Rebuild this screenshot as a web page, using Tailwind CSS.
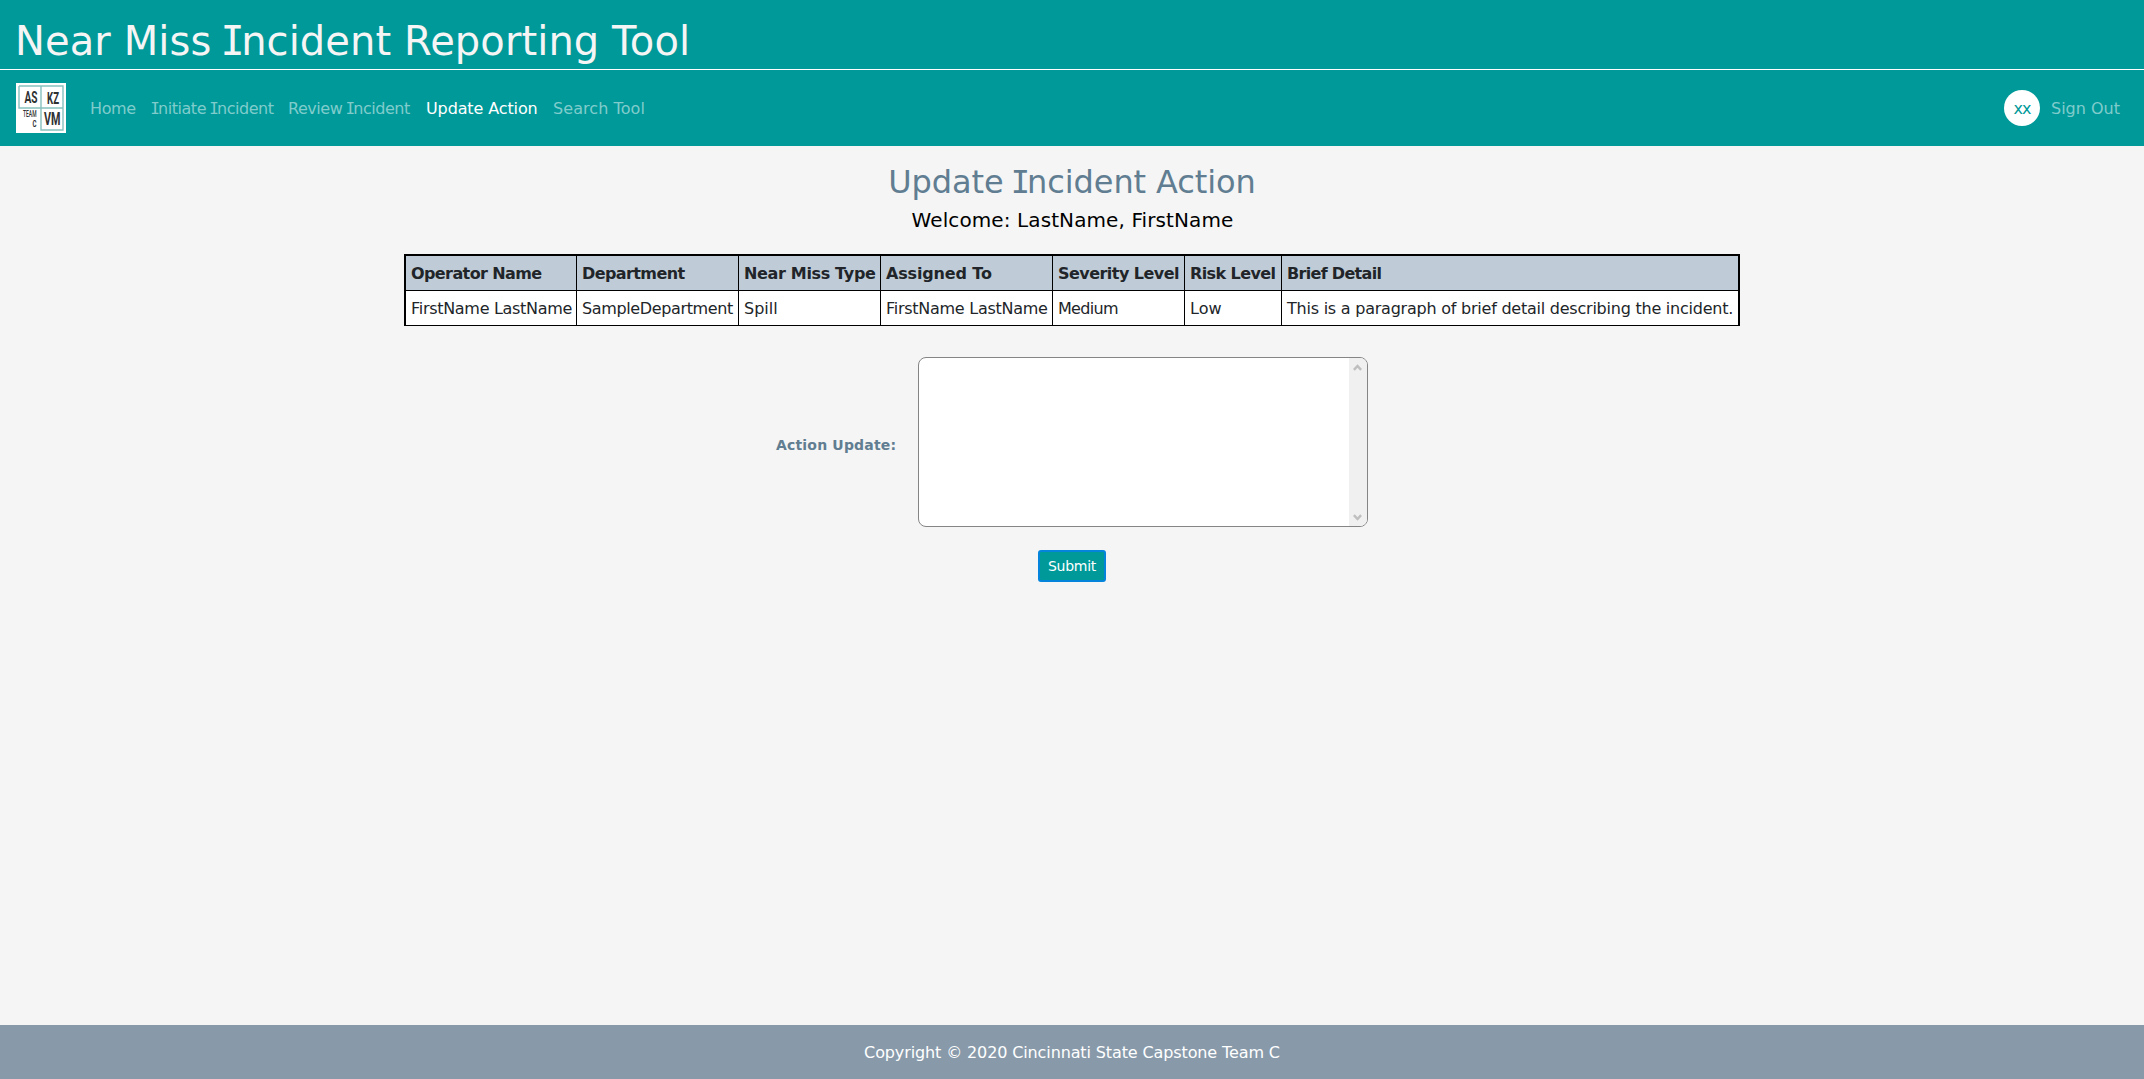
<!DOCTYPE html>
<html lang="en">
<head>
<meta charset="utf-8">
<title>Near Miss Incident Reporting Tool</title>
<script src="https://cdn.jsdelivr.net/npm/@tailwindcss/browser@4"></script>
</head>
<body class="flex h-[1079px] flex-col overflow-hidden bg-[#f5f5f5] font-['Verdana','DejaVu_Sans',sans-serif] text-base text-[#212529]">
  <header class="bg-[#009999]">
    <div class="h-[70px] border-b border-white pt-4 pl-[15px]">
      <h1 class="h-[50px] text-[40px] leading-[50px] tracking-[0.09px] whitespace-nowrap text-[#f5f5f5]">Near Miss <span class="-mx-[0.09em] font-['DejaVu_Sans_Mono']">I</span>ncident Reporting Tool</h1>
    </div>
    <nav class="flex h-[76px] items-center pr-6 pl-4">
      <svg class="size-[50px] shrink-0 overflow-visible" viewBox="0 0 50 50">
        <rect width="50" height="50" fill="#fff"/>
        <g fill="none" stroke="#86c1bf" stroke-width="1.4">
          <path d="M3 3H47V47H25V3M3 3V25H47"/>
        </g>
        <g fill="#303133" font-family="Roboto, 'Liberation Sans', sans-serif" font-weight="700">
          <text x="8.5" y="20" font-size="16" textLength="13" lengthAdjust="spacingAndGlyphs">AS</text>
          <text x="31" y="20.500" font-size="16" textLength="12" lengthAdjust="spacingAndGlyphs">KZ</text>
          <text x="28" y="42" font-size="17.500" textLength="16.500" lengthAdjust="spacingAndGlyphs">VM</text>
          <text x="7" y="34" font-size="8.500" font-weight="500" textLength="13.500" lengthAdjust="spacingAndGlyphs">TEAM</text>
          <text x="16.500" y="43.500" font-size="9.500" font-weight="700" textLength="4" lengthAdjust="spacingAndGlyphs">C</text>
        </g>
      </svg>
      <div class="mt-0.5 ml-6 flex h-6 items-center gap-4 leading-6 whitespace-nowrap text-[#80cccc]">
        <a class="w-[45px] tracking-[-0.37px]">Home</a>
        <a class="w-[121px] tracking-[-0.45px]"><span class="-mr-[0.09em] -ml-[0.05em] font-['DejaVu_Sans_Mono']">I</span>nitiate <span class="-mx-[0.09em] font-['DejaVu_Sans_Mono']">I</span>ncident</a>
        <a class="w-[122px] tracking-[-0.46px]">Review <span class="-mx-[0.09em] font-['DejaVu_Sans_Mono']">I</span>ncident</a>
        <a class="w-[111px] tracking-[-0.12px] text-white">Update Action</a>
        <a class="tracking-[0.08px]">Search Tool</a>
      </div>
      <div class="ml-auto flex items-center">
        <span class="mr-[11px] flex size-9 items-center justify-center rounded-full bg-white pt-0.5 tracking-[-1px] text-[#009999]">xx</span>
        <a class="pt-0.5 leading-6 text-[#80cccc]">Sign Out</a>
      </div>
    </nav>
  </header>

  <main class="flex flex-1 flex-col items-center">
    <h2 class="mt-4 h-10 text-[32px] leading-10 tracking-[-0.09px] text-[#607d91]">Update <span class="-mx-[0.09em] font-['DejaVu_Sans_Mono']">I</span>ncident Action</h2>
    <p class="mt-1 h-7 pl-px text-xl leading-7 tracking-[0.1px] text-black">Welcome: LastName, FirstName</p>

    <div class="mt-5 w-[1336px] border-2 border-b border-black bg-white whitespace-nowrap">
      <div class="grid h-[35px] grid-cols-[171px_162px_142px_172px_132px_97px_1fr] grid-rows-[34px] divide-x divide-black border-b border-black bg-[#bfccd7] leading-[36px] font-bold">
        <div class="pl-[5px] tracking-[-0.6px]">Operator Name</div>
        <div class="pl-[5px] tracking-[-0.6px]">Department</div>
        <div class="pl-[5px] tracking-[-0.34px]">Near Miss Type</div>
        <div class="pl-[5px] tracking-[-0.15px]">Assigned To</div>
        <div class="pl-[5px] tracking-[-0.54px]">Severity Level</div>
        <div class="pl-[5px] tracking-[-0.6px]">Risk Level</div>
        <div class="pl-[5px] tracking-[-0.69px]">Brief Detail</div>
      </div>
      <div class="grid h-[34px] grid-cols-[171px_162px_142px_172px_132px_97px_1fr] grid-rows-[34px] divide-x divide-black leading-[36px]">
        <div class="pl-[5px] tracking-[-0.3px]">FirstName LastName</div>
        <div class="pl-[5px] tracking-[-0.37px]">SampleDepartment</div>
        <div class="pl-[5px]">Spill</div>
        <div class="pl-[5px] tracking-[-0.27px]">FirstName LastName</div>
        <div class="pl-[5px] tracking-[-0.68px]">Medium</div>
        <div class="pl-[5px]">Low</div>
        <div class="pl-[5px] tracking-[-0.23px]">This is a paragraph of brief detail describing the incident.</div>
      </div>
    </div>

    <div class="mt-[31px] flex w-[592px] items-center justify-between">
      <label class="pt-[6px] text-sm font-bold tracking-[0.18px] text-[#607d91]">Action Update:</label>
      <div class="flex h-[170px] w-[450px] justify-end overflow-hidden rounded-lg border border-[#858585] bg-white">
        <div class="flex w-[18px] flex-col items-center justify-between bg-[#f0f0f0] pt-1.5 pr-[2px] pb-[5px]">
          <svg class="h-[7px] w-[9px]" viewBox="0 0 9 7" fill="none" stroke="#bfbfbf" stroke-width="2.500"><path d="M0.900 5.900L4.500 2L8.100 5.900"/></svg>
          <svg class="h-[7px] w-[9px]" viewBox="0 0 9 7" fill="none" stroke="#bfbfbf" stroke-width="2.500"><path d="M0.900 1.100L4.500 5L8.100 1.100"/></svg>
        </div>
      </div>
    </div>

    <button class="mt-[23px] h-8 w-[68px] rounded-[3px] border-2 border-[#0584dc] bg-[#009999] text-sm leading-7 tracking-[-0.24px] text-white">Submit</button>
  </main>

  <footer class="h-[54px] bg-[#889aaa] text-center leading-[56px] tracking-[-0.12px] text-white">Copyright © 2020 Cincinnati State Capstone Team C</footer>
</body>
</html>
